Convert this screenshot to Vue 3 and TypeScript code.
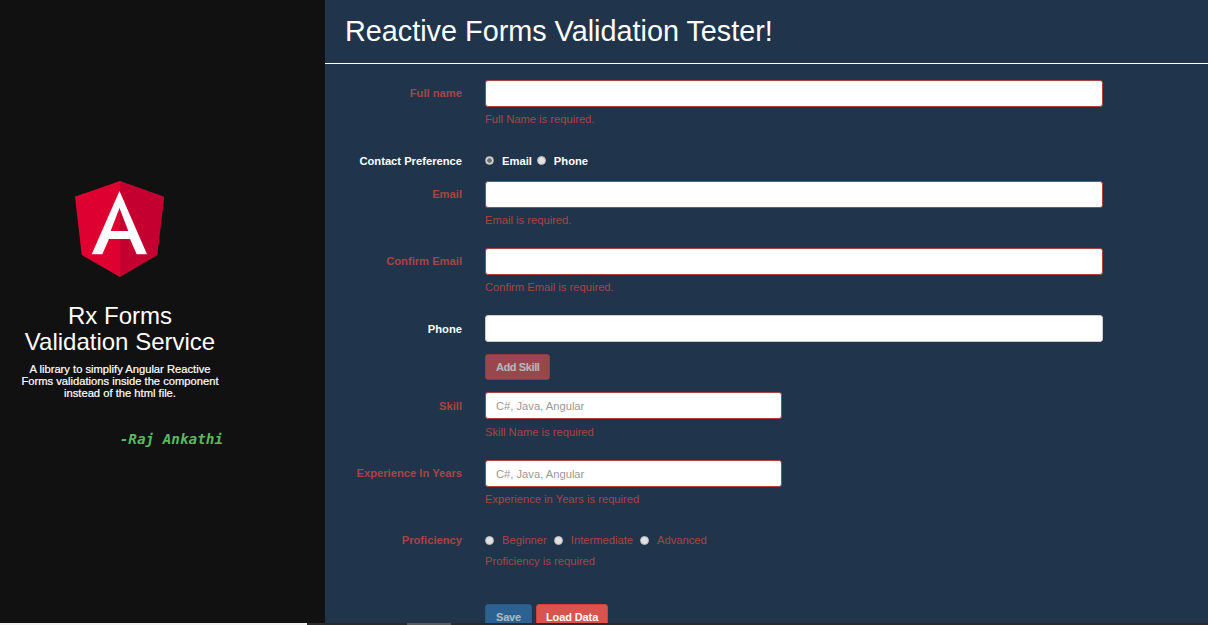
<template>
  <div class="page">
    <div class="columns">
      <aside class="sidebar">
        <svg class="logo" viewBox="0 0 90 96" width="90" height="96" aria-hidden="true">
          <polygon fill="#dd0031" points="45,0 0,15.7 6.7,74 45,96" />
          <polygon fill="#c3002f" points="45,0 89.3,15.7 82.3,74 45,96" />
          <path fill="#fff" fill-rule="evenodd" d="M44.5 10 L16.7 73.3 H27.3 L34 58 H55 L61.7 73.3 H72 Z M35.7 50 H53.3 L44.5 27 Z" />
        </svg>
        <h2 class="brand">Rx Forms<br />Validation Service</h2>
        <p class="tagline">A library to simplify Angular Reactive<br />Forms validations inside the component<br />instead of the html file.</p>
        <div class="author">-Raj Ankathi</div>
      </aside>

      <main class="main">
        <h1 class="title">Reactive Forms Validation Tester!</h1>
        <hr class="rule" />
        <form class="form" @submit.prevent>
          <div class="row invalid after-error">
            <label>Full name</label>
            <div class="field">
              <input type="text" />
              <span class="help">Full Name is required.</span>
            </div>
          </div>

          <div class="row radios-row contact-row">
            <label>Contact Preference</label>
            <div class="radios">
              <input type="radio" name="contact" checked />
              <span>Email</span>
              <input type="radio" name="contact" />
              <span>Phone</span>
            </div>
          </div>

          <div class="row invalid after-error">
            <label>Email</label>
            <div class="field">
              <input type="text" />
              <span class="help">Email is required.</span>
            </div>
          </div>

          <div class="row invalid after-error">
            <label>Confirm Email</label>
            <div class="field">
              <input type="text" />
              <span class="help">Confirm Email is required.</span>
            </div>
          </div>

          <div class="row phone-row">
            <label>Phone</label>
            <div class="field">
              <input type="text" />
            </div>
          </div>

          <div class="row add-row">
            <span></span>
            <div class="field">
              <button type="button" class="btn danger faded add-skill">Add Skill</button>
            </div>
          </div>

          <div class="row invalid after-error narrow skill-row">
            <label>Skill</label>
            <div class="field">
              <input type="text" placeholder="C#, Java, Angular" />
              <span class="help">Skill Name is required</span>
            </div>
          </div>

          <div class="row invalid after-error narrow">
            <label>Experience In Years</label>
            <div class="field">
              <input type="text" placeholder="C#, Java, Angular" />
              <span class="help">Experience in Years is required</span>
            </div>
          </div>

          <div class="row invalid radios-row level-row">
            <label>Proficiency</label>
            <div class="field">
              <div class="radios">
                <input type="radio" name="level" />
                <span>Beginner</span>
                <input type="radio" name="level" />
                <span>Intermediate</span>
                <input type="radio" name="level" />
                <span>Advanced</span>
              </div>
              <span class="help">Proficiency is required</span>
            </div>
          </div>

          <div class="row actions">
            <span></span>
            <div class="buttons">
              <button type="button" class="btn primary faded save">Save</button>
              <button type="button" class="btn danger load">Load Data</button>
            </div>
          </div>
        </form>
      </main>
    </div>
    <div class="scrollstrip">
      <span class="strip-light"></span>
      <span class="strip-dark"></span>
      <span class="strip-thumb"></span>
      <span class="strip-rest"></span>
    </div>
  </div>
</template>

<script setup lang="ts">
// static screenshot, nothing to wire up
</script>

<style>
html, body {
  margin: 0;
  overflow: hidden;
}
</style>

<style scoped>
.page {
  width: 1208px;
  height: 625px;
  display: flex;
  flex-direction: column;
  overflow: hidden;
  font-family: "Liberation Sans", Arial, sans-serif;
  font-size: 11.2px;
}

.columns {
  flex: 1;
  min-height: 0;
  display: flex;
}

.sidebar {
  width: 325px;
  flex-shrink: 0;
  background: #111;
  color: #fff;
  box-sizing: border-box;
  padding: 181px 85px 0 0;
  display: flex;
  flex-direction: column;
  align-items: center;
}

.logo {
  display: block;
  flex-shrink: 0;
}

.brand {
  margin: 26px 0 0;
  font-size: 24px;
  font-weight: 400;
  line-height: 26px;
  text-align: center;
  white-space: nowrap;
}

.tagline {
  margin: 8px 0 0;
  font-size: 11.2px;
  line-height: 12px;
  text-align: center;
  white-space: nowrap;
  color: #fff;
  -webkit-text-stroke: 0.2px #fff;
}

.author {
  align-self: flex-end;
  margin: 32px 17px 0 0;
  font-family: "DejaVu Sans Mono", "Liberation Mono", monospace;
  font-size: 14.3px;
  font-weight: 700;
  font-style: italic;
  color: #5cb85c;
  line-height: 16px;
  white-space: nowrap;
}

.main {
  flex: 1;
  min-width: 0;
  background: #20354c;
  overflow: hidden;
}

.title {
  margin: 0;
  padding: 13px 20px 0;
  font-size: 28.8px;
  font-weight: 400;
  line-height: 36px;
  color: #fff;
}

.rule {
  margin: 14px 0 0;
  border: 0;
  height: 1px;
  background: #fff;
}

.form {
  padding-top: 16px;
  display: flex;
  flex-direction: column;
}

.row {
  display: grid;
  grid-template-columns: 137px 618px;
  column-gap: 23px;
  margin-bottom: 12px;
  color: #fff;
}

.row label {
  text-align: right;
  font-weight: 700;
  line-height: 27px;
}

.row.invalid,
.row.invalid .radios span {
  color: #a94442;
}

.row.after-error {
  margin-bottom: 21px;
}

.row.add-row {
  margin-bottom: 12px;
}

.phone-row label,
.skill-row label {
  padding-top: 1px;
}

.row.phone-row {
  margin-bottom: 11px;
}

.field {
  display: flex;
  flex-direction: column;
  align-items: flex-start;
}

.field input[type="text"] {
  width: 100%;
  height: 27px;
  box-sizing: border-box;
  border: 1px solid #ccc;
  border-radius: 3px;
  background: #fff;
  padding: 0 10px;
  font: 11.2px "Liberation Sans", Arial, sans-serif;
  color: #555;
  outline: none;
}

.field input::placeholder {
  color: #999;
}

.narrow .field input[type="text"] {
  width: 297px;
}

.invalid .field input[type="text"] {
  border-color: #a94442;
}

.help {
  margin-top: 6px;
  line-height: 13px;
  color: #a94442;
}

.skill-row .help,
.level-row .help {
  margin-top: 7px;
}

.radios {
  display: flex;
  align-items: center;
  height: 16px;
}

.radios input {
  appearance: none;
  width: 9px;
  height: 9px;
  box-sizing: border-box;
  margin: 0 8px 0 0;
  border: 1px solid #b5b5b5;
  border-radius: 50%;
  background: #e2e2e2;
}

.radios input:checked {
  background: radial-gradient(circle, #6f6f6f 0 2px, #d8d8d8 2.5px);
}

.radios span {
  margin-right: 5px;
  font-weight: 700;
}

.invalid .radios span {
  margin-right: 7px;
  font-weight: 400;
}

.radios-row {
  margin-top: 5px;
  margin-bottom: 13px;
}

.radios-row label {
  line-height: 16px;
}

.contact-row {
  margin-bottom: 12px;
}

.contact-row label {
  padding-top: 1px;
}

.contact-row .radios span {
  padding-top: 2px;
}

.actions {
  margin-top: 23px;
}

.buttons {
  display: flex;
  gap: 4px;
}

.btn {
  height: 26px;
  box-sizing: border-box;
  border: 1px solid transparent;
  border-radius: 3px;
  padding: 0 10px;
  font: 700 11px "Liberation Sans", Arial, sans-serif;
  color: #fff;
}

.btn.primary {
  background: #337ab7;
  border-color: #2e6da4;
}

.btn.danger {
  background: #d9534f;
  border-color: #d43f3a;
}

.btn.faded {
  opacity: 0.65;
}

.add-skill {
  letter-spacing: -0.4px;
}

.save {
  letter-spacing: -0.2px;
}

.btn.load {
  padding: 0 9px;
  letter-spacing: -0.1px;
}

.scrollstrip {
  height: 2px;
  flex-shrink: 0;
  display: flex;
}

.strip-light {
  width: 307px;
  background: #f1f1f1;
}

.strip-dark {
  width: 100px;
  background: #2b2b2b;
}

.strip-thumb {
  width: 44px;
  background: #5a5a5a;
}

.strip-rest {
  flex: 1;
  background: #2b2b2b;
}
</style>
